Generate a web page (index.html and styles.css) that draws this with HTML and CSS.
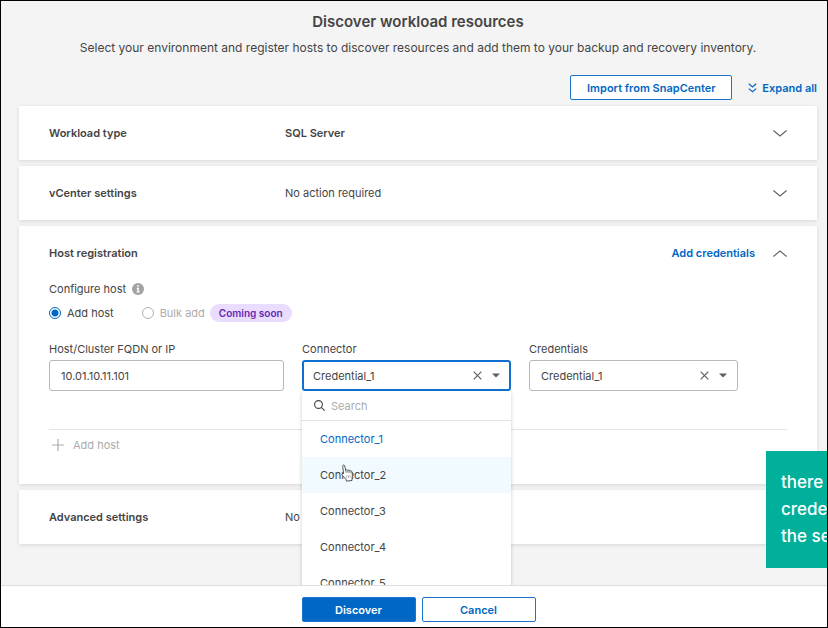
FILE: index.html
```html
<!DOCTYPE html>
<html lang="en">
<head>
<meta charset="utf-8">
<meta name="viewport" content="width=device-width, initial-scale=1">
<title>Discover workload resources</title>
<link rel="stylesheet" href="styles.css">
</head>
<body>
<div class="shell">
  <main class="content">
    <header class="intro">
      <h1 class="title">Discover workload resources</h1>
      <p class="subtitle">Select your environment and register hosts to discover resources and add them to your backup and recovery inventory.</p>
    </header>

    <div class="toolbar">
      <button class="btn btn-import" type="button">Import from SnapCenter</button>
      <button class="link" type="button">
        <svg width="9" height="10" viewBox="0 0 9 10" fill="none" stroke="currentColor" stroke-width="1.2"><path d="M.8 .8 4.5 4 8.200 .8M.8 5.600 4.500 8.800 8.200 5.600"/></svg>
        Expand all
      </button>
    </div>

    <div class="cards">
      <section class="card">
        <div class="card-head">
          <h2 class="card-title">Workload type</h2>
          <span class="card-value strong">SQL Server</span>
          <button class="icon-btn" type="button" aria-label="Expand workload type"><svg width="14" height="7" viewBox="0 0 14 7" fill="none" stroke="currentColor" stroke-width="1.100"><path d="M.4 .5 7 6 13.600 .5"/></svg></button>
        </div>
      </section>

      <section class="card">
        <div class="card-head">
          <h2 class="card-title">vCenter settings</h2>
          <span class="card-value">No action required</span>
          <button class="icon-btn" type="button" aria-label="Expand vCenter settings"><svg width="14" height="7" viewBox="0 0 14 7" fill="none" stroke="currentColor" stroke-width="1.100"><path d="M.4 .5 7 6 13.600 .5"/></svg></button>
        </div>
      </section>

      <section class="card">
        <div class="card-head">
          <h2 class="card-title">Host registration</h2>
          <a class="link card-link" href="#">Add credentials</a>
          <button class="icon-btn" type="button" aria-label="Collapse host registration"><svg width="14" height="7" viewBox="0 0 14 7" fill="none" stroke="currentColor" stroke-width="1.100"><path d="M.4 6.500 7 1 13.600 6.500"/></svg></button>
        </div>
        <div class="card-body">
          <div class="row configure">
            Configure host
            <svg width="12" height="12" viewBox="0 0 12 12"><circle cx="6" cy="6" r="6" fill="#a3a3a3"/><path d="M5.200 2.200h1.700v1.500H5.200zM4.700 4.700h2.200v3.700h.8v1.100H4.500V8.400h.8V5.700h-.6z" fill="#fff"/></svg>
          </div>
          <div class="row modes">
            <label class="choice"><input type="radio" name="mode" checked>Add host</label>
            <label class="choice muted"><input type="radio" name="mode" disabled>Bulk add</label>
            <span class="badge">Coming soon</span>
          </div>

          <div class="fields">
            <div class="field">
              <label for="host">Host/Cluster FQDN or IP</label>
              <input class="control" id="host" type="text" value="10.01.10.11.101">
            </div>
            <div class="field">
              <label for="connector">Connector</label>
              <div class="picker open">
                <select class="control" id="connector"><option>Credential_1</option></select>
                <span class="picker-icons">
                  <button class="clear" type="button" aria-label="Clear connector"><svg width="9" height="9" viewBox="0 0 9 9" fill="none" stroke="currentColor" stroke-width="1.200"><path d="M.7 .7 8.300 8.300M8.300 .7 .7 8.300"/></svg></button>
                  <svg width="8" height="5" viewBox="0 0 8 5"><path d="M0 .5h8L4 4.500z" fill="currentColor"/></svg>
                </span>
                <div class="menu">
                  <div class="search">
                    <svg width="11" height="11" viewBox="0 0 11 11" fill="none" stroke="currentColor" stroke-width="1.100"><circle cx="4.500" cy="4.500" r="3.900"/><path d="M7.300 7.300 10.600 10.600"/></svg>
                    <input type="text" placeholder="Search" aria-label="Search connectors">
                  </div>
                  <ul class="options" role="listbox" aria-label="Connectors">
                    <li class="option selected" role="option" aria-selected="true">Connector_1</li>
                    <li class="option hover" role="option">Connector_2
                      <svg class="pointer" width="12" height="18" viewBox="0 0 12 18"><path d="M2.600 9.600 1.700 2.400C1.500.8 3.300.5 3.700 2L4.700 6.300c.5-.9 1.900-.7 2.100.2.600-.7 1.800-.4 2 .5.700-.6 1.900-.2 2.100.9l.5 3.400c.2 1.400-.5 2.300-.4 3.300v1.900l-5.500.6-.4-1.700-3.700-4C.3 10.100 1.400 8.900 2.600 9.600z" fill="#fff" stroke="#444" stroke-width=".9" stroke-linejoin="round"/><path d="M4.700 6.300l.4 2.300M6.800 6.600l.3 2.200M8.800 7.100l.3 2" stroke="#444" stroke-width=".8"/><path d="M5.500 11.300l.3 3M7.200 11.100l.3 3M8.900 10.900l.3 3" stroke="#888" stroke-width=".6"/></svg>
                    </li>
                    <li class="option" role="option">Connector_3</li>
                    <li class="option" role="option">Connector_4</li>
                    <li class="option" role="option">Connector_5</li>
                  </ul>
                </div>
              </div>
            </div>
            <div class="field">
              <label for="credentials">Credentials</label>
              <div class="picker">
                <select class="control" id="credentials"><option>Credential_1</option></select>
                <span class="picker-icons">
                  <button class="clear" type="button" aria-label="Clear credentials"><svg width="9" height="9" viewBox="0 0 9 9" fill="none" stroke="currentColor" stroke-width="1.200"><path d="M.7 .7 8.300 8.300M8.300 .7 .7 8.300"/></svg></button>
                  <svg width="8" height="5" viewBox="0 0 8 5"><path d="M0 .5h8L4 4.500z" fill="currentColor"/></svg>
                </span>
              </div>
            </div>
          </div>

          <div class="more">
            <button class="add-host" type="button" disabled>
              <svg width="12" height="12" viewBox="0 0 12 12" fill="none" stroke="currentColor" stroke-width="1.200"><path d="M6 0v12M0 6h12"/></svg>
              Add host
            </button>
          </div>
        </div>
      </section>

      <section class="card">
        <div class="card-head">
          <h2 class="card-title">Advanced settings</h2>
          <span class="card-value">No</span>
        </div>
      </section>
    </div>
  </main>

  <footer class="actions">
    <button class="btn btn-primary" type="button">Discover</button>
    <button class="btn" type="button">Cancel</button>
  </footer>

  <aside class="note">there<br>crede<br>the se</aside>
</div>
</body>
</html>
```
FILE: styles.css
```css
* {
  box-sizing: border-box;
}

body {
  margin: 0;
  color: #444;
  font: 11px/16px Inter, "Liberation Sans", sans-serif;
}

button,
input,
select {
  margin: 0;
  font: inherit;
  color: inherit;
}

button {
  padding: 0;
  border: 0;
  background: none;
}

svg {
  display: block;
  flex: none;
}

h1,
h2,
p,
ul {
  margin: 0;
  padding: 0;
}

.shell {
  position: relative;
  display: flex;
  flex-direction: column;
  height: 100vh;
  overflow: hidden;
  border: 1px solid #000;
  background: #f4f4f4;
}

.content {
  flex: 1;
  min-height: 0;
  overflow: hidden;
  padding: 11px 10px 0 18px;
}

.intro {
  text-align: center;
}

.title {
  font-size: 15px;
  font-weight: 600;
  line-height: 20px;
}

.subtitle {
  margin-top: 8px;
  font-size: 12px;
  line-height: 16px;
}

.toolbar {
  display: flex;
  justify-content: flex-end;
  align-items: center;
  gap: 16px;
  margin-top: 19px;
}

.btn {
  width: 114px;
  height: 25px;
  border: 1px solid #1a73cc;
  border-radius: 2px;
  background: #fff;
  color: #0067c5;
  font-weight: 600;
}

.btn-import {
  width: 162px;
}

.btn-primary {
  background: #0067c5;
  color: #fff;
}

.link {
  display: flex;
  align-items: center;
  gap: 5px;
  color: #0067c5;
  font-weight: 600;
  text-decoration: none;
}

.cards {
  display: flex;
  flex-direction: column;
  gap: 6px;
  margin-top: 6px;
}

.card {
  padding: 0 30px;
  background: #fff;
  box-shadow: 0 1px 4px rgba(0, 0, 0, 0.12);
}

.card-head {
  display: flex;
  align-items: center;
  height: 54px;
}

.card-title {
  width: 236px;
  font-size: 11px;
  font-weight: 600;
}

.strong {
  font-weight: 600;
}

.card-link {
  margin-left: auto;
  margin-right: 18px;
}

.icon-btn {
  color: #606060;
}

.card-value + .icon-btn {
  margin-left: auto;
}

.row {
  display: flex;
  align-items: center;
  height: 24px;
}

.configure {
  gap: 6px;
  margin-top: -3px;
}

.choice {
  display: flex;
  align-items: center;
  gap: 6px;
}

.choice input {
  appearance: none;
  width: 12px;
  height: 12px;
  border: 1px solid #b0b0b0;
  border-radius: 50%;
}

.choice input:checked {
  border-color: #0067c5;
  background: radial-gradient(circle, #0067c5 3px, #fff 4px);
}

.choice.muted {
  margin-left: 28px;
  color: #acacac;
}

.badge {
  margin-left: 5px;
  padding: 1px 9px;
  border-radius: 9px;
  background: #e9dcff;
  color: #6527b0;
  font-size: 10px;
  font-weight: 600;
}

.fields {
  display: grid;
  grid-template-columns: 235fr 209fr 209fr;
  gap: 18px;
  margin-top: 16px;
  padding-right: 49px;
}

.field > label {
  display: block;
  margin-bottom: 3px;
}

.control {
  display: block;
  appearance: none;
  width: 100%;
  height: 31px;
  padding: 0 11px;
  border: 1px solid #b8b8b8;
  border-radius: 3px;
  outline: 0;
  background: #fff;
}

.picker {
  position: relative;
}

.picker.open .control {
  padding: 0 9px;
  border: 2px solid #1070d0;
}

.picker-icons {
  position: absolute;
  top: 0;
  right: 11px;
  display: flex;
  align-items: center;
  gap: 10px;
  height: 31px;
  color: #606060;
}

.menu {
  position: absolute;
  top: 31px;
  left: 0;
  right: 0;
  z-index: 1;
  background: #fff;
  box-shadow: 0 2px 4px rgba(0, 0, 0, 0.2);
}

.search {
  display: flex;
  align-items: center;
  gap: 6px;
  height: 30px;
  padding: 0 12px;
  border-bottom: 1px solid #e2e2e2;
}

.search input {
  width: 100%;
  padding: 0;
  border: 0;
  outline: 0;
}

.search input::placeholder {
  color: #acacac;
  opacity: 1;
}

.options {
  list-style: none;
}

.option {
  position: relative;
  height: 36px;
  padding: 0 18px;
  line-height: 36px;
}

.option.selected {
  color: #0067c5;
}

.option.hover {
  background: #f1faff;
}

.pointer {
  position: absolute;
  top: 7px;
  left: 39px;
}

.more {
  display: flex;
  height: 55px;
  margin-top: 38px;
  padding: 7px 3px;
  border-top: 1px solid #e4e4e4;
}

.add-host {
  display: flex;
  align-items: center;
  gap: 9px;
  height: 16px;
  color: #acacac;
}

.actions {
  position: relative;
  display: flex;
  justify-content: center;
  gap: 6px;
  padding: 11px 0 5px 9px;
  border-top: 1px solid #dedede;
  background: #fff;
}

.note {
  position: absolute;
  right: 0;
  bottom: 59px;
  z-index: 2;
  width: 61px;
  padding: 18px 0 18px 15px;
  overflow: hidden;
  background: #00b09b;
  color: #fff;
  font-size: 17px;
  font-weight: 500;
  line-height: 27px;
  white-space: nowrap;
}
```
